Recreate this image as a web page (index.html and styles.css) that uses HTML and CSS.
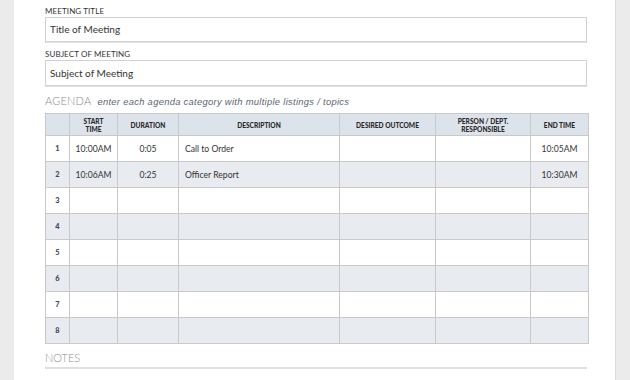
FILE: index.html
```html
<!DOCTYPE html>
<html>
<head>
<meta charset="utf-8">
<link rel="stylesheet" href="styles.css">
</head>
<body>
<div class="page">
  <div class="field-label">MEETING TITLE</div>
  <div class="field">Title of Meeting</div>
  <div class="field-label second">SUBJECT OF MEETING</div>
  <div class="field tall">Subject of Meeting</div>
  <div class="agenda-head"><span class="agenda-title">AGENDA</span><span class="agenda-hint">enter each agenda category with multiple listings / topics</span></div>
  <table class="agenda">
    <colgroup>
      <col class="c-num"><col class="c-start"><col class="c-dur"><col class="c-desc"><col class="c-out"><col class="c-person"><col class="c-end">
    </colgroup>
    <thead>
      <tr>
        <th></th>
        <th>START<br>TIME</th>
        <th>DURATION</th>
        <th>DESCRIPTION</th>
        <th>DESIRED OUTCOME</th>
        <th>PERSON / DEPT.<br>RESPONSIBLE</th>
        <th>END TIME</th>
      </tr>
    </thead>
    <tbody>
      <tr><td class="num">1</td><td class="ctr">10:00AM</td><td class="ctr">0:05</td><td class="desc">Call to Order</td><td></td><td></td><td class="ctr">10:05AM</td></tr>
      <tr><td class="num">2</td><td class="ctr">10:06AM</td><td class="ctr">0:25</td><td class="desc">Officer Report</td><td></td><td></td><td class="ctr">10:30AM</td></tr>
      <tr><td class="num">3</td><td></td><td></td><td></td><td></td><td></td><td></td></tr>
      <tr><td class="num">4</td><td></td><td></td><td></td><td></td><td></td><td></td></tr>
      <tr><td class="num">5</td><td></td><td></td><td></td><td></td><td></td><td></td></tr>
      <tr><td class="num">6</td><td></td><td></td><td></td><td></td><td></td><td></td></tr>
      <tr><td class="num">7</td><td></td><td></td><td></td><td></td><td></td><td></td></tr>
      <tr><td class="num">8</td><td></td><td></td><td></td><td></td><td></td><td></td></tr>
    </tbody>
  </table>
  <div class="notes">NOTES</div>
</div>
</body>
</html>
```
FILE: styles.css
```css
html, body {
  margin: 0;
  padding: 0;
  background: #ebebeb;
  height: 380px;
  overflow: hidden;
}
body {
  font-family: Lato, "Liberation Sans", Arial, sans-serif;
  color: #333;
}
.page {
  margin-left: 14px;
  width: 602px;
  height: 380px;
  box-sizing: border-box;
  background: #fff;
  border-right: 1px solid #dcdcdc;
  padding: 6px 28px 0 31px;
}
.field-label {
  font-size: 8px;
  line-height: 11px;
  color: #333;
  letter-spacing: 0.1px;
}
.field-label.second {
  margin-top: 5px;
  height: 13px;
  line-height: 15px;
}
.field {
  height: 25px;
  box-sizing: border-box;
  border: 1px solid #d2d2d2;
  box-shadow: 0 1px 0 #e2e2e2;
  padding-left: 4px;
  font-size: 10px;
  line-height: 23px;
  color: #333;
}
.field.tall {
  height: 26px;
  line-height: 24px;
}
.agenda-head {
  margin-top: 6px;
  height: 21px;
  line-height: 14px;
  white-space: nowrap;
}
.agenda-title {
  font-size: 11px;
  font-weight: 300;
  color: #888;
  letter-spacing: 0.2px;
}
.agenda-hint {
  margin-left: 6px;
  font-family: "Liberation Sans", Arial, sans-serif;
  font-style: italic;
  font-size: 9.4px;
  letter-spacing: 0.3px;
  color: #5a6472;
}
table.agenda {
  border-collapse: collapse;
  table-layout: fixed;
  width: 543px;
}
.c-num { width: 24px; }
.c-start { width: 48px; }
.c-dur { width: 61px; }
.c-desc { width: 161px; }
.c-out { width: 96px; }
.c-person { width: 95px; }
.c-end { width: 58px; }
.agenda th, .agenda td {
  border: 1px solid #c9c9c9;
  padding: 0;
}
.agenda th {
  background: #dde3ea;
  height: 21px;
  font-size: 6.6px;
  line-height: 8px;
  font-weight: 900;
  color: #2a2a2a;
  text-align: center;
}
.agenda td {
  height: 25px;
  font-size: 8.6px;
  color: #333;
}
.agenda tbody tr:nth-child(even) td {
  background: #e8ebf0;
}
.agenda td.ctr { text-align: center; }
.agenda td.desc { padding-left: 6px; }
.agenda td.num {
  text-align: center;
  font-weight: 900;
  font-size: 7.4px;
  color: #3e4b5e;
}
.notes {
  margin-top: 7px;
  font-size: 11px;
  font-weight: 300;
  line-height: 13px;
  color: #8c8c8c;
  padding-bottom: 3px;
  border-bottom: 2px solid #dedede;
}
```
